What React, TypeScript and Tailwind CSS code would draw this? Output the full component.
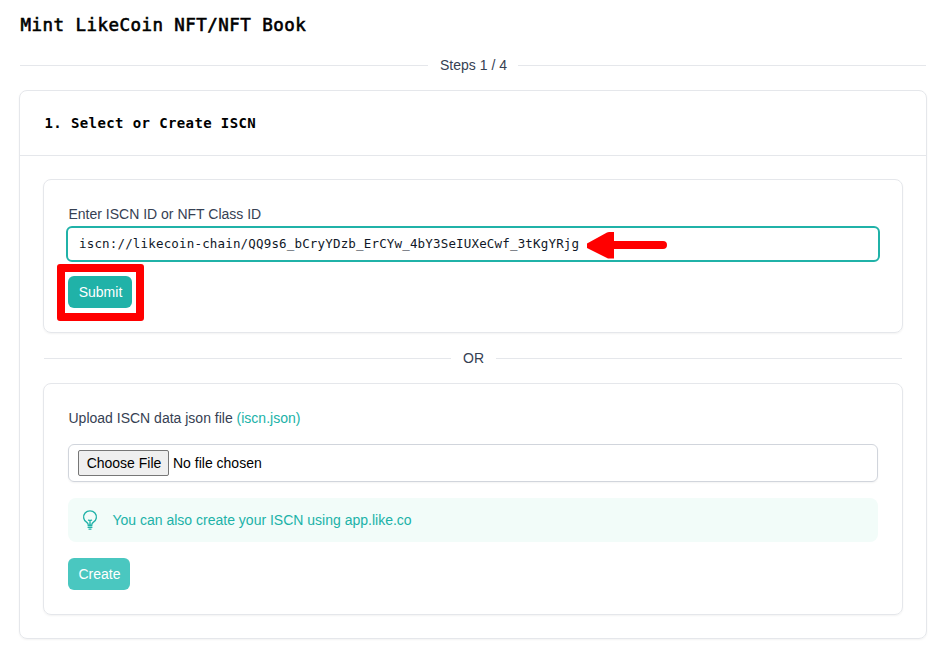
import React from "react";

function Divider({ label }: { label: string }) {
  return (
    <div className="flex items-center gap-3">
      <div className="h-px flex-1 bg-gray-200" />
      <span className="-mr-[0.5px] pl-[0.5px] text-sm leading-5 text-gray-700">{label}</span>
      <div className="h-px flex-1 bg-gray-200" />
    </div>
  );
}

function BulbIcon() {
  return (
    <svg width="20" height="20" viewBox="0 0 20 20" fill="none" stroke="currentColor" strokeWidth="1.35" strokeLinecap="round" strokeLinejoin="round">
      <path d="M8.1 14.3c0-.8-.6-1.4-1.3-1.9a6.4 6.2 0 1 1 6.4 0c-.7.5-1.3 1.1-1.3 1.9" />
      <path d="M10 15v-4.4M8.5 10.2q1.5.6 3 0M8.1 15.2h3.8M8.1 17.2h3.8M9 19.1h2" />
    </svg>
  );
}

export default function App() {
  return (
    <div className="h-[656px] w-[944px] overflow-hidden bg-white pl-5 pr-[18px] pt-[11px] font-['Liberation_Sans',Arial,sans-serif] text-sm text-gray-700">
      <h1 className="h-7 whitespace-pre pl-[0.5px] font-['DejaVu_Sans_Mono',monospace] text-[17.5px] leading-7 tracking-[0.455px] text-black [-webkit-text-stroke:0.6px_black]">
        Mint LikeCoin NFT/NFT Book
      </h1>
      <div className="mt-4">
        <Divider label="Steps 1 / 4" />
      </div>
      <main className="-ml-px mt-[15px] h-[549px] w-[908px] rounded-lg border border-gray-200 shadow-xs">
        <h2 className="flex h-[65px] items-center whitespace-pre border-b border-gray-200 pl-[24.5px] font-['DejaVu_Sans_Mono',monospace] text-[14px] font-bold tracking-[0.39px] text-black">
          1. Select or Create ISCN
        </h2>
        <div className="px-[23px] pt-[23px]">
          <section className="h-[154px] rounded-lg border border-gray-200 pl-6 pt-6 shadow-xs">
            <div className="leading-5">
              <span className="pl-[0.5px]">Enter ISCN ID or NFT Class ID</span>
            </div>
            <div className="-ml-0.5 mt-0.5 flex h-9 w-[814px] items-center rounded-md border-2 border-[#20b2a8] pl-[11px]">
              <span className="w-[500px] whitespace-pre pb-px font-['DejaVu_Sans_Mono',monospace] text-[12.5px] tracking-[0.17px] text-gray-900">
                iscn://likecoin-chain/QQ9s6_bCryYDzb_ErCYw_4bY3SeIUXeCwf_3tKgYRjg
              </span>
              <svg className="ml-1.5 mt-0.5" width="83" height="28" viewBox="0 0 83 28">
                <path d="M2 12.5 22 1.5Q23 1 24 1H29V10H78a4 4 0 0 1 0 8H29V27.5H24Q23 27.5 22 27L2 17Z" fill="red" />
              </svg>
            </div>
            <div className="-ml-[11px] mt-0.5 h-[57px] w-[87px] rounded-[3px] border-8 border-[red] pl-[3px] pt-1">
              <button className="h-8 w-16 rounded-md bg-[#20b2a8] pl-px text-white">Submit</button>
            </div>
          </section>
          <div className="mx-px mt-[15px]">
            <Divider label="OR" />
          </div>
          <section className="mt-[15px] h-[232px] rounded-lg border border-gray-200 px-6 pt-6 shadow-xs">
            <div className="leading-5">
              <span className="pl-[0.5px]">Upload ISCN data json file </span>
              <span className="text-[#20b2a8]">(iscn.json)</span>
            </div>
            <div className="mt-4 flex h-[38px] items-center rounded-md border border-gray-300 pl-[9px] text-black shadow-xs">
              <button className="h-[26px] w-[91px] rounded-[2px] border border-[#767676] bg-[#efefef] pl-px">Choose File</button>
              <span className="ml-1">No file chosen</span>
            </div>
            <div className="mt-4 flex h-11 items-center rounded-lg bg-[#f2fcf9] pl-3 text-[#20b2a8]">
              <BulbIcon />
              <span className="ml-[12.5px]">You can also create your ISCN using app.like.co</span>
            </div>
            <button className="mt-4 h-8 w-[62px] rounded-md bg-[#4ac7c0] pl-px text-white">Create</button>
          </section>
        </div>
      </main>
    </div>
  );
}
